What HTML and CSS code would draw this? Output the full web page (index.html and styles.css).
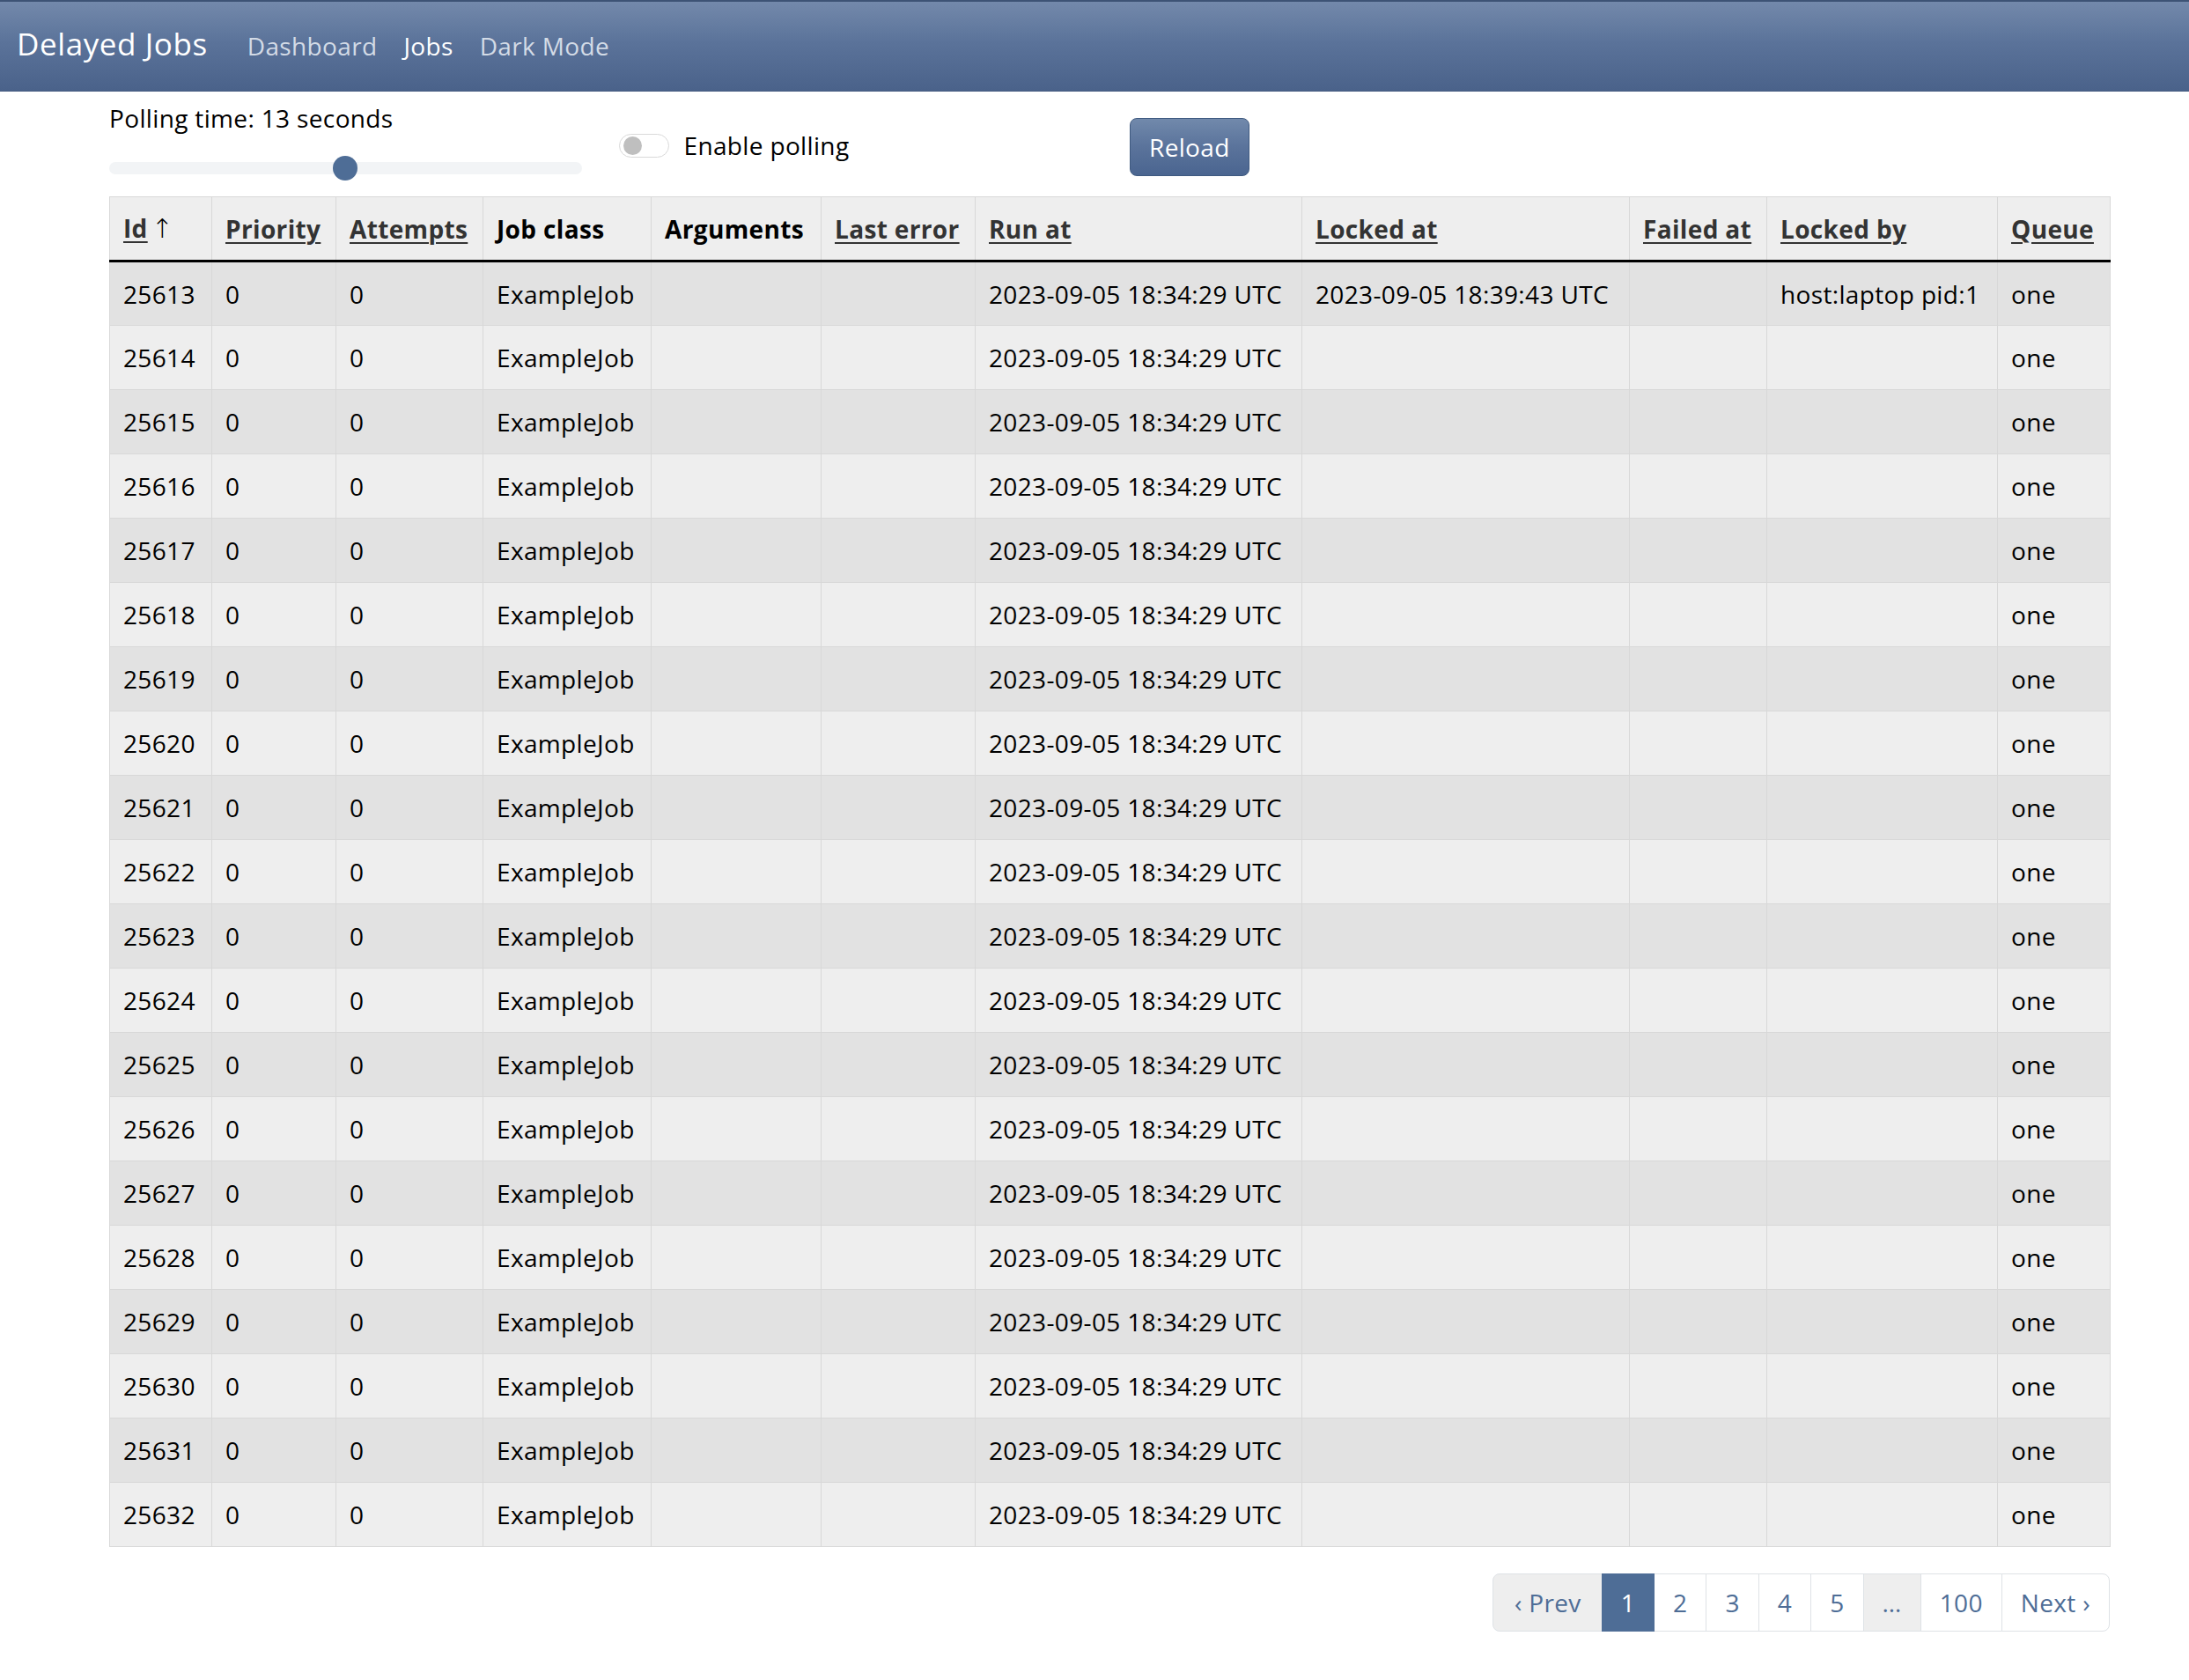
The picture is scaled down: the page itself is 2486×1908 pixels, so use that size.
FILE: index.html
```html
<!DOCTYPE html>
<html lang="en">
<head>
<meta charset="utf-8">
<title>Delayed Jobs</title>
<link rel="stylesheet" href="styles.css">
</head>
<body>
<nav class="navbar">
  <a class="brand" href="#">Delayed Jobs</a>
  <a class="nav-link" href="#">Dashboard</a>
  <a class="nav-link active" href="#">Jobs</a>
  <a class="nav-link" href="#">Dark Mode</a>
</nav>
<main class="container">
  <div class="controls">
    <div class="poll-col">
      <div class="poll-label">Polling time: 13 seconds</div>
      <div class="range">
        <div class="range-track"></div>
        <div class="range-thumb"></div>
      </div>
    </div>
    <div class="switch-col">
      <span class="switch"><span class="switch-knob"></span></span>
      <span class="switch-label">Enable polling</span>
    </div>
    <div class="reload-col">
      <button class="btn-reload">Reload</button>
    </div>
  </div>

  <table class="jobs">
    <colgroup>
      <col class="c-id"><col class="c-pri"><col class="c-att"><col class="c-class"><col class="c-args"><col class="c-err"><col class="c-run"><col class="c-lock"><col class="c-fail"><col class="c-lockby"><col class="c-queue">
    </colgroup>
    <thead>
      <tr>
        <th><a href="#">Id</a><span class="arrow">↑</span></th>
        <th><a href="#">Priority</a></th>
        <th><a href="#">Attempts</a></th>
        <th>Job class</th>
        <th>Arguments</th>
        <th><a href="#">Last error</a></th>
        <th><a href="#">Run at</a></th>
        <th><a href="#">Locked at</a></th>
        <th><a href="#">Failed at</a></th>
        <th><a href="#">Locked by</a></th>
        <th><a href="#">Queue</a></th>
      </tr>
    </thead>
    <tbody>
      <tr><td>25613</td><td>0</td><td>0</td><td>ExampleJob</td><td></td><td></td><td>2023-09-05 18:34:29 UTC</td><td>2023-09-05 18:39:43 UTC</td><td></td><td>host:laptop pid:1</td><td>one</td></tr>
      <tr><td>25614</td><td>0</td><td>0</td><td>ExampleJob</td><td></td><td></td><td>2023-09-05 18:34:29 UTC</td><td></td><td></td><td></td><td>one</td></tr>
      <tr><td>25615</td><td>0</td><td>0</td><td>ExampleJob</td><td></td><td></td><td>2023-09-05 18:34:29 UTC</td><td></td><td></td><td></td><td>one</td></tr>
      <tr><td>25616</td><td>0</td><td>0</td><td>ExampleJob</td><td></td><td></td><td>2023-09-05 18:34:29 UTC</td><td></td><td></td><td></td><td>one</td></tr>
      <tr><td>25617</td><td>0</td><td>0</td><td>ExampleJob</td><td></td><td></td><td>2023-09-05 18:34:29 UTC</td><td></td><td></td><td></td><td>one</td></tr>
      <tr><td>25618</td><td>0</td><td>0</td><td>ExampleJob</td><td></td><td></td><td>2023-09-05 18:34:29 UTC</td><td></td><td></td><td></td><td>one</td></tr>
      <tr><td>25619</td><td>0</td><td>0</td><td>ExampleJob</td><td></td><td></td><td>2023-09-05 18:34:29 UTC</td><td></td><td></td><td></td><td>one</td></tr>
      <tr><td>25620</td><td>0</td><td>0</td><td>ExampleJob</td><td></td><td></td><td>2023-09-05 18:34:29 UTC</td><td></td><td></td><td></td><td>one</td></tr>
      <tr><td>25621</td><td>0</td><td>0</td><td>ExampleJob</td><td></td><td></td><td>2023-09-05 18:34:29 UTC</td><td></td><td></td><td></td><td>one</td></tr>
      <tr><td>25622</td><td>0</td><td>0</td><td>ExampleJob</td><td></td><td></td><td>2023-09-05 18:34:29 UTC</td><td></td><td></td><td></td><td>one</td></tr>
      <tr><td>25623</td><td>0</td><td>0</td><td>ExampleJob</td><td></td><td></td><td>2023-09-05 18:34:29 UTC</td><td></td><td></td><td></td><td>one</td></tr>
      <tr><td>25624</td><td>0</td><td>0</td><td>ExampleJob</td><td></td><td></td><td>2023-09-05 18:34:29 UTC</td><td></td><td></td><td></td><td>one</td></tr>
      <tr><td>25625</td><td>0</td><td>0</td><td>ExampleJob</td><td></td><td></td><td>2023-09-05 18:34:29 UTC</td><td></td><td></td><td></td><td>one</td></tr>
      <tr><td>25626</td><td>0</td><td>0</td><td>ExampleJob</td><td></td><td></td><td>2023-09-05 18:34:29 UTC</td><td></td><td></td><td></td><td>one</td></tr>
      <tr><td>25627</td><td>0</td><td>0</td><td>ExampleJob</td><td></td><td></td><td>2023-09-05 18:34:29 UTC</td><td></td><td></td><td></td><td>one</td></tr>
      <tr><td>25628</td><td>0</td><td>0</td><td>ExampleJob</td><td></td><td></td><td>2023-09-05 18:34:29 UTC</td><td></td><td></td><td></td><td>one</td></tr>
      <tr><td>25629</td><td>0</td><td>0</td><td>ExampleJob</td><td></td><td></td><td>2023-09-05 18:34:29 UTC</td><td></td><td></td><td></td><td>one</td></tr>
      <tr><td>25630</td><td>0</td><td>0</td><td>ExampleJob</td><td></td><td></td><td>2023-09-05 18:34:29 UTC</td><td></td><td></td><td></td><td>one</td></tr>
      <tr><td>25631</td><td>0</td><td>0</td><td>ExampleJob</td><td></td><td></td><td>2023-09-05 18:34:29 UTC</td><td></td><td></td><td></td><td>one</td></tr>
      <tr><td>25632</td><td>0</td><td>0</td><td>ExampleJob</td><td></td><td></td><td>2023-09-05 18:34:29 UTC</td><td></td><td></td><td></td><td>one</td></tr>
    </tbody>
  </table>

  <div class="pager-row">
    <ul class="pagination">
      <li class="page disabled"><span>‹ Prev</span></li>
      <li class="page active"><span>1</span></li>
      <li class="page"><a href="#">2</a></li>
      <li class="page"><a href="#">3</a></li>
      <li class="page"><a href="#">4</a></li>
      <li class="page"><a href="#">5</a></li>
      <li class="page disabled"><span>…</span></li>
      <li class="page"><a href="#">100</a></li>
      <li class="page"><a href="#">Next ›</a></li>
    </ul>
  </div>
</main>
</body>
</html>
```
FILE: styles.css
```css
* { box-sizing: border-box; }

html, body {
  margin: 0;
  padding: 0;
  background: #ffffff;
}

body {
  font-family: "Open Sans", "Liberation Sans", sans-serif;
  font-size: 28px;
  line-height: 42px;
  letter-spacing: 0.35px;
  color: #000;
}

/* Navbar */
.navbar {
  display: flex;
  align-items: baseline;
  height: 104px;
  padding: 22px 0 0 19px;
  border-top: 2px solid #3d5375;
  border-bottom: 1px solid #435a80;
  background: linear-gradient(to bottom, #7389ab 0%, #5b739a 45%, #4a628a 100%);
}

.brand {
  font-size: 35px;
  line-height: 52px;
  letter-spacing: 0.6px;
  color: #ffffff;
  text-decoration: none;
  margin-right: 30px;
}

.nav-link {
  font-size: 28px;
  line-height: 42px;
  color: #d3dbe6;
  text-decoration: none;
  padding: 0 15px;
}

.nav-link.active { color: #ffffff; }

/* Container */
.container {
  width: 2272px;
  margin-left: 124px;
}

/* Controls */
.controls {
  display: grid;
  grid-template-columns: repeat(4, 1fr);
  column-gap: 42px;
  align-items: start;
  padding-top: 9px;
}

.poll-label {
  line-height: 42px;
}

.range {
  position: relative;
  height: 42px;
  margin-top: 15px;
}

.range-track {
  position: absolute;
  left: 0;
  right: 0;
  top: 14px;
  height: 14px;
  border-radius: 7px;
  background: #f2f4f6;
}

.range-thumb {
  position: absolute;
  top: 7px;
  left: calc(50% - 14px);
  width: 28px;
  height: 28px;
  border-radius: 50%;
  background: #4e6d96;
}

.switch-col {
  display: flex;
  align-items: center;
  margin-top: 31px;
}

.switch {
  position: relative;
  display: inline-block;
  width: 57px;
  height: 27px;
  border: 1px solid #d9d9d9;
  border-radius: 14px;
  background: #fff;
  margin-right: 17px;
}

.switch-knob {
  position: absolute;
  left: 4px;
  top: 2px;
  width: 21px;
  height: 21px;
  border-radius: 50%;
  background: #bfbfbf;
}

.reload-col {
  margin-top: 21px;
}

.btn-reload {
  font-family: "Open Sans", "Liberation Sans", sans-serif;
  font-size: 28px;
  line-height: 42px;
  letter-spacing: 0.35px;
  color: #fff;
  padding: 11px 21px;
  margin-left: 2px;
  border: 1px solid #3f5a80;
  border-radius: 8px;
  background: linear-gradient(to bottom, #7189ab 0%, #5a739b 50%, #4a6590 100%);
}

/* Table */
.jobs {
  width: 2272px;
  margin-top: 11px;
  border-collapse: collapse;
  table-layout: fixed;
}

.c-id { width: 116px; }
.c-pri { width: 141px; }
.c-att { width: 167px; }
.c-class { width: 191px; }
.c-args { width: 193px; }
.c-err { width: 175px; }
.c-run { width: 371px; }
.c-lock { width: 372px; }
.c-fail { width: 156px; }
.c-lockby { width: 262px; }
.c-queue { width: 128px; }

.jobs th,
.jobs td {
  border: 1px solid #d8d8d8;
  padding: 14px 15px;
  text-align: left;
  white-space: nowrap;
  overflow: hidden;
  line-height: 42px;
}

.jobs td { height: 73px; }

.jobs thead th {
  height: 68px;
  background: #eeeeee;
  font-weight: 700;
  color: #000;
  border-bottom: 3px solid #000;
}

.jobs thead th a {
  color: #333;
  text-decoration: underline;
  text-decoration-thickness: 2px;
  text-underline-offset: 4px;
}

.jobs .arrow {
  font-family: "DejaVu Sans", sans-serif;
  font-weight: 300;
  font-size: 30px;
  margin-left: 4px;
}

.jobs tbody tr:nth-child(odd) td { background: #e2e2e2; }
.jobs tbody tr:nth-child(even) td { background: #eeeeee; }

/* Pagination */
.pager-row {
  display: flex;
  justify-content: flex-end;
  margin-top: 30px;
}

.pagination {
  display: flex;
  list-style: none;
  margin: 0;
  padding: 0;
}

.page > a,
.page > span {
  display: block;
  padding: 11px 21px;
  line-height: 42px;
  color: #4e6d96;
  text-decoration: none;
  background: #fff;
  border: 1px solid #dee2e6;
  margin-left: -1px;
}

.page:first-child > span {
  margin-left: 0;
  padding: 11px 23px 11px 24px;
  border-radius: 8px 0 0 8px;
}

.page:last-child > a {
  border-radius: 0 8px 8px 0;
}

.page.disabled > span {
  background: #eeeeee;
}

.page.active > span {
  background: #4e6d96;
  border-color: #4e6d96;
  color: #fff;
  position: relative;
  z-index: 1;
}
```
